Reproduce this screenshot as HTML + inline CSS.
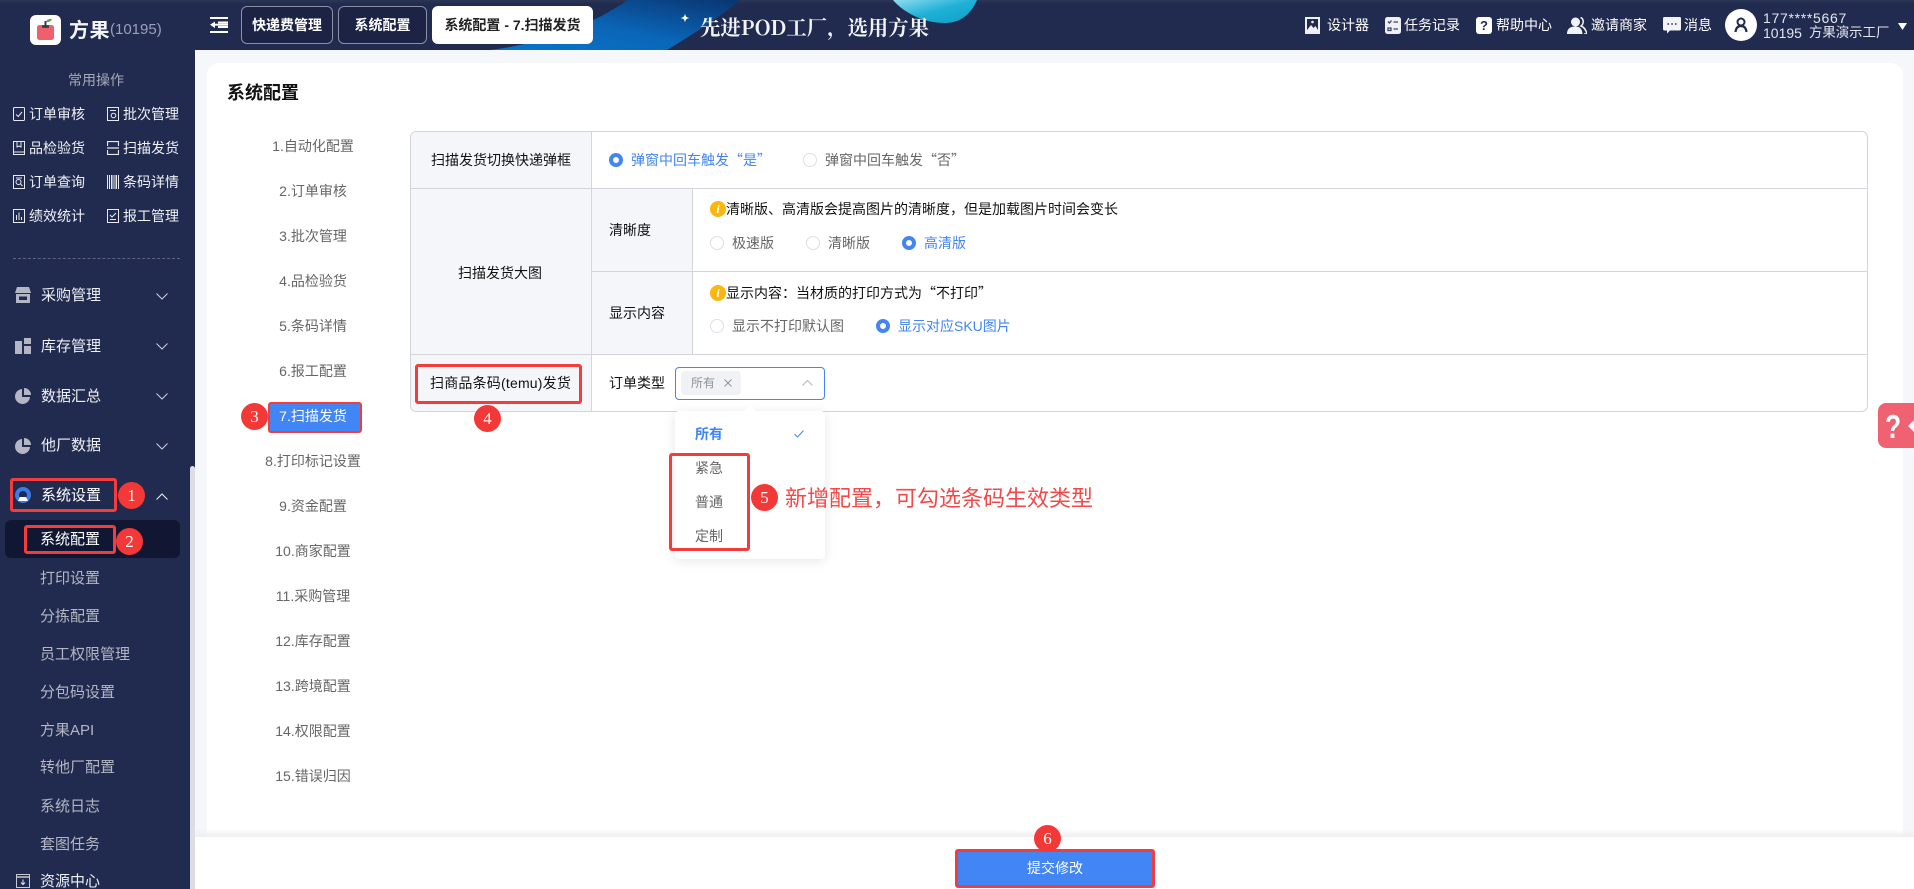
<!DOCTYPE html>
<html lang="zh"><head><meta charset="utf-8"><title>系统配置</title>
<style>
*{box-sizing:border-box;margin:0;padding:0}
html,body{width:1914px;height:889px;overflow:hidden;background:#f6f7fb;font-family:"Liberation Sans","Noto Sans CJK SC",sans-serif;font-size:14px}
body{position:relative}
.a{position:absolute}
.t{position:absolute;line-height:20px;white-space:nowrap}
.cj{font-family:"Noto Sans CJK SC","Liberation Sans",sans-serif}
#hd{left:0;top:0;width:1914px;height:50px;background:linear-gradient(#2b3555 0,#212b4f 4px)}
#sb{left:0;top:50px;width:195px;height:839px;background:#212b4f}
.tab{position:absolute;top:6px;height:38px;border:1px solid #8b90a3;border-radius:6px;background:#1c2344;color:#fff;font-weight:bold;text-align:center;line-height:36px;font-size:14px}
.top{color:#fff;font-size:14px}
.qk{color:#f0f1f5;font-size:14px}
.m{color:#eef0f4;font-size:15px;left:41px}
.s{color:#b4b7c3;font-size:15px;left:40px}
.n{left:207px;width:212px;text-align:center;color:#666;font-size:14px}
.l{background:#d4d5dc}
.r{position:absolute;width:14px;height:14px;border-radius:50%;border:1px solid #dcdfe6;background:#fff}
.r.on{border:4.5px solid #4285f4}
.bk{color:#111;font-size:14px}
.gr{color:#666;font-size:14px}
.bl{color:#4285f4;font-size:14px}
.i{position:absolute;width:16px;height:16px;border-radius:50%;background:#fdb60c;color:#fff;font:italic bold 12px/16px "Liberation Serif",serif;text-align:center}
.rb{position:absolute;border:3px solid #f33d3d;border-radius:3px}
.b{position:absolute;width:27px;height:27px;border-radius:50%;background:#f33838;color:#fff;font:17px/27px "Liberation Serif",serif;text-align:center}
svg{position:absolute;display:block}
</style></head><body>

<div class="a" id="hd"></div>
<svg style="left:480px;top:0" width="520" height="50" viewBox="480 0 520 50">
<defs>
<linearGradient id="g1" x1="0" y1="1" x2="1" y2="0"><stop offset="0" stop-color="#0a74c8"/><stop offset=".45" stop-color="#0a66b8"/><stop offset="1" stop-color="#0a3470"/></linearGradient>
<linearGradient id="g2" x1="0" y1="0" x2="1" y2="1"><stop offset="0" stop-color="#8fdcf0"/><stop offset=".5" stop-color="#1fb0d6"/><stop offset="1" stop-color="#0f9fc8"/></linearGradient>
</defs>
<path d="M490 50C540 44 590 26 628 0H740C716 20 690 36 667 50Z" fill="url(#g1)"/>
<path d="M893 0C905 14 925 23 945 23C962 23 972 12 977 0Z" fill="url(#g2)"/>
<path d="M685 13.500C685.500 16.500 686.500 17.500 689.500 18C686.500 18.500 685.500 19.500 685 22.500C684.500 19.500 683.500 18.500 680.500 18C683.500 17.500 684.500 16.500 685 13.500Z" fill="#fff"/>
</svg>
<div class="t" style="left:700px;top:15px;color:#f2f4f8;font:bold 20.400px/24px 'Noto Serif CJK SC','Liberation Serif',serif">先进POD工厂，选用方果</div>

<!-- logo -->
<div class="a" style="left:30px;top:15px;width:31px;height:30px;background:#fff;border-radius:6px"></div>
<svg style="left:30px;top:15px" width="31" height="30" viewBox="0 0 31 30">
<rect x="7" y="10" width="17" height="15" rx="2.500" fill="#f0606c"/>
<path d="M15.500 6V13" stroke="#3a3a44" stroke-width="2"/><path d="M12 11.500H19" stroke="#3a3a44" stroke-width="2.500"/>
<path d="M16 7C17 4.500 19 3.500 22 4C21 6.500 19 7.500 16 7Z" fill="#5aa83a"/>
</svg>
<div class="t" style="left:69px;top:19px;color:#f4f5f8;font-size:20px;line-height:24px;font-weight:bold;letter-spacing:.5px">方果</div>
<div class="t" style="left:110px;top:20px;color:#9aa0b5;font-size:15px;line-height:20px">(10195)</div>

<!-- hamburger -->
<svg style="left:210px;top:17px" width="18" height="16" viewBox="0 0 18 16"><path d="M0 1H18M8 5.500H18M8 10H18M0 15H18" stroke="#fff" stroke-width="2" fill="none"/><path d="M0 7.700L5 4.500V11Z" fill="#fff"/><path d="M4 7.700H18" stroke="#fff" stroke-width="2"/></svg>

<div class="tab" style="left:241px;width:92px">快递费管理</div>
<div class="tab" style="left:338px;width:89px">系统配置</div>
<div class="tab" style="left:432px;width:161px;background:#fff;border-color:#fff;color:#222">系统配置 - 7.扫描发货</div>

<!-- top right -->
<svg style="left:1305px;top:17px" width="15" height="17" viewBox="0 0 15 17"><rect width="15" height="17" fill="#eef0f5"/><rect x="2" y="2" width="11" height="11" fill="#212b4f"/><path d="M2 13L6 8L8.500 11L10.500 9L13 13Z" fill="#eef0f5"/><circle cx="7.500" cy="5" r="1.300" fill="#eef0f5"/></svg>
<div class="t top" style="left:1327px;top:15px">设计器</div>
<svg style="left:1385px;top:17px" width="16" height="17" viewBox="0 0 16 17"><rect width="16" height="17" rx="2.500" fill="#eef0f5"/><path d="M3 4.500L4.500 6L6.500 3.500M3 11H6V13.500H3ZM8.500 5H13M8.500 12H13" stroke="#3d4668" stroke-width="1.300" fill="none"/></svg>
<div class="t top" style="left:1404px;top:15px">任务记录</div>
<div class="a" style="left:1476px;top:17px;width:16px;height:17px;border-radius:3px;background:#fff;color:#212b4f;font:bold 13px/17px 'Liberation Sans',sans-serif;text-align:center">?</div>
<div class="t top" style="left:1496px;top:15px">帮助中心</div>
<svg style="left:1567px;top:17px" width="20" height="17" viewBox="0 0 20 17"><circle cx="8.500" cy="5" r="4.500" fill="#f2f3f7"/><path d="M0 17C0 11 4 9.500 8.500 9.500C13 9.500 15 12 15.500 17Z" fill="#f2f3f7"/><path d="M13.500 .5C17 1.500 17 7 14 9C17 10 19 13 20 17H17" fill="none" stroke="#f2f3f7" stroke-width="1.500"/></svg>
<div class="t top" style="left:1591px;top:15px">邀请商家</div>
<svg style="left:1663px;top:17px" width="18" height="17" viewBox="0 0 18 17"><path d="M1.500 0H16.500A1.500 1.500 0 0 1 18 1.500V12A1.500 1.500 0 0 1 16.500 13.500H7L4 16.500V13.500H1.500A1.500 1.500 0 0 1 0 12V1.500A1.500 1.500 0 0 1 1.500 0Z" fill="#f2f3f7"/><path d="M4.500 7H6M8.300 7H9.800M12 7H13.500" stroke="#212b4f" stroke-width="1.600"/></svg>
<div class="t top" style="left:1684px;top:15px">消息</div>
<div class="a" style="left:1725px;top:9px;width:32px;height:32px;border-radius:50%;background:#fff"></div>
<svg style="left:1732px;top:16px" width="18" height="18" viewBox="0 0 18 18"><circle cx="9" cy="6" r="3.500" fill="none" stroke="#212b4f" stroke-width="2"/><path d="M3.500 16C4 11.500 6 10 9 10C12 10 14 11.500 14.500 16" fill="none" stroke="#212b4f" stroke-width="2.200"/></svg>
<div class="t top" style="left:1763px;top:8px;color:#e4e6ec;letter-spacing:.7px">177****5667</div>
<div class="t top" style="left:1763px;top:23px;color:#e4e6ec">10195</div>
<div class="t top" style="left:1809px;top:23px;color:#e4e6ec;font-size:13.400px">方果演示工厂</div>
<svg style="left:1898px;top:23px" width="9" height="7" viewBox="0 0 9 7"><path d="M0 0H9L4.500 7Z" fill="#fff"/></svg>

<!-- sidebar -->
<div class="a" id="sb"></div>
<div class="t" style="left:68px;top:70px;color:#a6a9b6;font-size:14px">常用操作</div>

<svg style="left:13px;top:107px" width="12" height="14" viewBox="0 0 12 14"><rect x=".5" y=".5" width="11" height="13" rx="1" fill="none" stroke="#e8e9ee"/><path d="M3 7.500L5.300 9.500L9 5" fill="none" stroke="#e8e9ee"/></svg>
<div class="t qk" style="left:29px;top:104px">订单审核</div>
<svg style="left:107px;top:107px" width="12" height="14" viewBox="0 0 12 14"><rect x=".5" y=".5" width="11" height="13" fill="none" stroke="#e8e9ee"/><path d="M3 3.500H9" stroke="#e8e9ee"/><circle cx="6.500" cy="8.500" r="2.300" fill="none" stroke="#e8e9ee"/></svg>
<div class="t qk" style="left:123px;top:104px">批次管理</div>

<svg style="left:13px;top:141px" width="12" height="14" viewBox="0 0 12 14"><path d="M.5.500H11.500V13.500H.5ZM.5 11H11.500M4 .5V6L6 5L8 6V.5" fill="none" stroke="#e8e9ee"/></svg>
<div class="t qk" style="left:29px;top:138px">品检验货</div>
<svg style="left:107px;top:141px" width="12" height="14" viewBox="0 0 12 14"><path d="M.5 5V.5H11.500V5M.5 9V13.500H11.500V9M0 7H12" fill="none" stroke="#e8e9ee" stroke-width="1.200"/></svg>
<div class="t qk" style="left:123px;top:138px">扫描发货</div>

<svg style="left:13px;top:175px" width="12" height="14" viewBox="0 0 12 14"><rect x=".5" y=".5" width="11" height="13" fill="none" stroke="#e8e9ee"/><circle cx="5.500" cy="7" r="2.500" fill="none" stroke="#e8e9ee"/><path d="M7.500 9L9.500 11M3 3H9" stroke="#e8e9ee"/></svg>
<div class="t qk" style="left:29px;top:172px">订单查询</div>
<svg style="left:107px;top:175px" width="12" height="14" viewBox="0 0 12 14"><path d="M.5 0V14M2.500 0V14M4.500 0V14M6 0V14M8 0V14M9.500 0V14M11.500 0V14" stroke="#e8e9ee"/></svg>
<div class="t qk" style="left:123px;top:172px">条码详情</div>

<svg style="left:13px;top:209px" width="12" height="14" viewBox="0 0 12 14"><rect x=".5" y=".5" width="11" height="13" fill="none" stroke="#e8e9ee"/><path d="M3.500 11V6M6 11V3.500M8.500 11V8" stroke="#e8e9ee"/></svg>
<div class="t qk" style="left:29px;top:206px">绩效统计</div>
<svg style="left:107px;top:209px" width="12" height="14" viewBox="0 0 12 14"><rect x=".5" y=".5" width="11" height="13" fill="none" stroke="#e8e9ee"/><path d="M3 6L5 8L9 4M3 10.500H9" fill="none" stroke="#e8e9ee"/></svg>
<div class="t qk" style="left:123px;top:206px">报工管理</div>

<div class="a" style="left:13px;top:258px;width:167px;border-top:1px dashed #5d6480"></div>

<svg style="left:15px;top:287px" width="16" height="16" viewBox="0 0 16 16"><path d="M2 0H14L16 6H0Z" fill="#b4b7c3"/><path d="M1 7H15V16H1Z" fill="#b4b7c3"/><rect x="4" y="9.500" width="8" height="3.500" fill="#212b4f"/></svg>
<div class="t m" style="top:286px">采购管理</div>
<svg style="left:156px;top:293px" width="12" height="7" viewBox="0 0 12 7"><path d="M.5.500L6 6L11.500.5" fill="none" stroke="#cfd1da" stroke-width="1"/></svg>

<svg style="left:15px;top:338px" width="16" height="16" viewBox="0 0 16 16"><path d="M0 3H7V16H0ZM9 0H16V6H9ZM9 8H16V16H9Z" fill="#b4b7c3"/></svg>
<div class="t m" style="top:337px">库存管理</div>
<svg style="left:156px;top:343px" width="12" height="7" viewBox="0 0 12 7"><path d="M.5.500L6 6L11.500.5" fill="none" stroke="#cfd1da" stroke-width="1"/></svg>

<svg style="left:15px;top:388px" width="16" height="16" viewBox="0 0 16 16"><path d="M7 1A7.500 7.500 0 1 0 15 9H7ZM9 0V7H16A7 7 0 0 0 9 0Z" fill="#b4b7c3"/></svg>
<div class="t m" style="top:387px">数据汇总</div>
<svg style="left:156px;top:393px" width="12" height="7" viewBox="0 0 12 7"><path d="M.5.500L6 6L11.500.5" fill="none" stroke="#cfd1da" stroke-width="1"/></svg>

<svg style="left:15px;top:438px" width="16" height="16" viewBox="0 0 16 16"><path d="M7 1A7.500 7.500 0 1 0 15 9H7ZM9 0V7H16A7 7 0 0 0 9 0Z" fill="#b4b7c3"/></svg>
<div class="t m" style="top:436px">他厂数据</div>
<svg style="left:156px;top:443px" width="12" height="7" viewBox="0 0 12 7"><path d="M.5.500L6 6L11.500.5" fill="none" stroke="#cfd1da" stroke-width="1"/></svg>

<svg style="left:15px;top:487px" width="16" height="17" viewBox="0 0 16 17"><circle cx="8" cy="8" r="6" fill="none" stroke="#3a7de8" stroke-width="4"/><path d="M3 14H13L11 10H5Z" fill="#fff"/></svg>
<div class="t m" style="top:486px;color:#fff">系统设置</div>
<svg style="left:156px;top:493px" width="12" height="7" viewBox="0 0 12 7"><path d="M.5 6.500L6 1L11.500 6.500" fill="none" stroke="#eef0f4" stroke-width="1"/></svg>

<div class="a" style="left:5px;top:520px;width:175px;height:38px;background:#111733;border-radius:6px"></div>
<div class="t s" style="top:530px;color:#fff">系统配置</div>
<div class="t s" style="top:569px">打印设置</div>
<div class="t s" style="top:607px">分拣配置</div>
<div class="t s" style="top:645px">员工权限管理</div>
<div class="t s" style="top:683px">分包码设置</div>
<div class="t s" style="top:721px">方果API</div>
<div class="t s" style="top:758px">转他厂配置</div>
<div class="t s" style="top:797px">系统日志</div>
<div class="t s" style="top:835px">套图任务</div>
<svg style="left:16px;top:874px" width="14" height="14" viewBox="0 0 14 14"><rect x=".5" y=".5" width="13" height="13" fill="none" stroke="#c6c8d2"/><path d="M0 3H14" stroke="#c6c8d2" stroke-width="1.500"/><path d="M7 5.500V10M5 8.500L7 10.500L9 8.500" fill="none" stroke="#e8e9ee"/></svg>
<div class="t s" style="top:872px;color:#eef0f4">资源中心</div>

<!-- scrollbar -->
<div class="a" style="left:190px;top:466px;width:5px;height:423px;background:#dcdde5;border-radius:3px 3px 0 0"></div>

<!-- card -->
<div class="a" style="left:207px;top:63px;width:1696px;height:790px;background:#fff;border-radius:12px 12px 0 0"></div>
<div class="t" style="left:227px;top:83px;font-size:18px;font-weight:bold;color:#111">系统配置</div>

<div class="t n" style="top:136px">1.自动化配置</div>
<div class="t n" style="top:181px">2.订单审核</div>
<div class="t n" style="top:226px">3.批次管理</div>
<div class="t n" style="top:271px">4.品检验货</div>
<div class="t n" style="top:316px">5.条码详情</div>
<div class="t n" style="top:361px">6.报工配置</div>
<div class="a" style="left:268px;top:402px;width:94px;height:31px;background:#4285f4;border:2.500px solid #f33d3d;border-radius:3px"></div>
<div class="t n" style="top:406px;color:#fff">7.扫描发货</div>
<div class="t n" style="top:451px">8.打印标记设置</div>
<div class="t n" style="top:496px">9.资金配置</div>
<div class="t n" style="top:541px">10.商家配置</div>
<div class="t n" style="top:586px">11.采购管理</div>
<div class="t n" style="top:631px">12.库存配置</div>
<div class="t n" style="top:676px">13.跨境配置</div>
<div class="t n" style="top:721px">14.权限配置</div>
<div class="t n" style="top:766px">15.错误归因</div>

<!-- table -->
<div class="a" style="left:410px;top:131px;width:1458px;height:281px;border:1px solid #d4d5dc;border-radius:6px;overflow:hidden;background:#fff">
  <div class="a" style="left:0;top:0;width:180px;height:279px;background:#f5f6fa"></div>
  <div class="a" style="left:180px;top:56px;width:101px;height:166px;background:#f5f6fa"></div>
  <div class="a l" style="left:0;top:56px;width:1456px;height:1px"></div>
  <div class="a l" style="left:180px;top:139px;width:1276px;height:1px"></div>
  <div class="a l" style="left:0;top:222px;width:1456px;height:1px"></div>
  <div class="a l" style="left:180px;top:0;width:1px;height:279px"></div>
  <div class="a l" style="left:281px;top:56px;width:1px;height:166px"></div>
</div>

<div class="t bk" style="left:431px;top:150px">扫描发货切换快递弹框</div>
<div class="t bk" style="left:458px;top:263px">扫描发货大图</div>
<div class="t bk" style="left:430px;top:373px;letter-spacing:.2px">扫商品条码(temu)发货</div>

<div class="r on" style="left:609px;top:153px"></div>
<div class="t bl cj" style="left:631px;top:150px">弹窗中回车触发“是”</div>
<div class="r" style="left:803px;top:153px"></div>
<div class="t gr cj" style="left:825px;top:150px">弹窗中回车触发“否”</div>

<div class="t bk" style="left:609px;top:220px">清晰度</div>
<div class="i" style="left:710px;top:201px">i</div>
<div class="t bk" style="left:726px;top:199px">清晰版、高清版会提高图片的清晰度，但是加载图片时间会变长</div>
<div class="r" style="left:710px;top:236px"></div>
<div class="t gr" style="left:732px;top:233px">极速版</div>
<div class="r" style="left:806px;top:236px"></div>
<div class="t gr" style="left:828px;top:233px">清晰版</div>
<div class="r on" style="left:902px;top:236px"></div>
<div class="t bl" style="left:924px;top:233px">高清版</div>

<div class="t bk" style="left:609px;top:303px">显示内容</div>
<div class="i" style="left:710px;top:285px">i</div>
<div class="t bk cj" style="left:726px;top:283px">显示内容：当材质的打印方式为“不打印”</div>
<div class="r" style="left:710px;top:319px"></div>
<div class="t gr" style="left:732px;top:316px">显示不打印默认图</div>
<div class="r on" style="left:876px;top:319px"></div>
<div class="t bl" style="left:898px;top:316px">显示对应SKU图片</div>

<div class="t bk" style="left:609px;top:373px">订单类型</div>
<div class="a" style="left:675px;top:367px;width:150px;height:33px;border:1px solid #4285f4;border-radius:4px;background:#fff"></div>
<div class="a" style="left:681px;top:371px;width:60px;height:24px;background:#f0f2f5;border-radius:4px"></div>
<div class="t" style="left:691px;top:373px;font-size:12px;color:#909399">所有</div>
<svg style="left:724px;top:379px" width="8" height="8" viewBox="0 0 8 8"><path d="M.5.500L7.500 7.500M7.500.500L.5 7.500" stroke="#909399" stroke-width="1"/></svg>
<svg style="left:802px;top:380px" width="11" height="6" viewBox="0 0 11 6"><path d="M.5 5.500L5.500.5L10.500 5.500" fill="none" stroke="#b4b6bc" stroke-width="1"/></svg>

<!-- dropdown -->
<div class="a" style="left:675px;top:411px;width:150px;height:148px;background:#fff;border-radius:4px;box-shadow:0 2px 12px rgba(0,0,0,.1)"></div>
<svg style="left:743px;top:405px" width="14" height="7" viewBox="0 0 14 7"><path d="M0 7L7 0L14 7Z" fill="#fff"/></svg>
<div class="t" style="left:695px;top:424px;color:#4285f4;font-weight:bold">所有</div>
<svg style="left:794px;top:430px" width="10" height="8" viewBox="0 0 10 8"><path d="M.5 4L3.500 7L9.500.5" fill="none" stroke="#4285f4" stroke-width="1"/></svg>
<div class="t gr" style="left:695px;top:458px">紧急</div>
<div class="t gr" style="left:695px;top:492px">普通</div>
<div class="t gr" style="left:695px;top:526px">定制</div>

<!-- float help -->
<div class="a" style="left:1878px;top:403px;width:36px;height:45px;background:#f06272;border-radius:8px 0 0 8px"></div>
<div class="t" style="left:1885px;top:410px;color:#fff;font:bold 33px/34px 'Liberation Sans',sans-serif;transform:scaleX(.8);transform-origin:left center">?</div>
<svg style="left:1908px;top:420px" width="6" height="12" viewBox="0 0 6 12"><path d="M6 0V12L0 6Z" fill="#fff"/></svg>

<!-- bottom bar -->
<div class="a" style="left:195px;top:829px;width:1719px;height:8px;background:linear-gradient(rgba(240,240,240,0),#eee)"></div>
<div class="a" style="left:195px;top:837px;width:1719px;height:52px;background:#fff"></div>
<div class="a" style="left:955px;top:849px;width:200px;height:39px;background:#4285f4;border:3px solid #f33d3d;border-radius:3px;color:#fff;text-align:center;line-height:33px;font-size:14px">提交修改</div>

<!-- annotations -->
<div class="rb" style="left:10px;top:478px;width:107px;height:34px"></div>
<div class="rb" style="left:24px;top:525px;width:92px;height:29px"></div>
<div class="rb" style="left:415px;top:364px;width:167px;height:40px"></div>
<div class="rb" style="left:669px;top:453px;width:81px;height:98px"></div>
<div class="b" style="left:118px;top:482px">1</div>
<div class="b" style="left:116px;top:528px">2</div>
<div class="b" style="left:241px;top:403px">3</div>
<div class="b" style="left:474px;top:405px">4</div>
<div class="b" style="left:751px;top:484px">5</div>
<div class="b" style="left:1034px;top:825px">6</div>
<div class="t" style="left:785px;top:484px;font-size:22px;line-height:30px;color:#f44848">新增配置，可勾选条码生效类型</div>
</body></html>
